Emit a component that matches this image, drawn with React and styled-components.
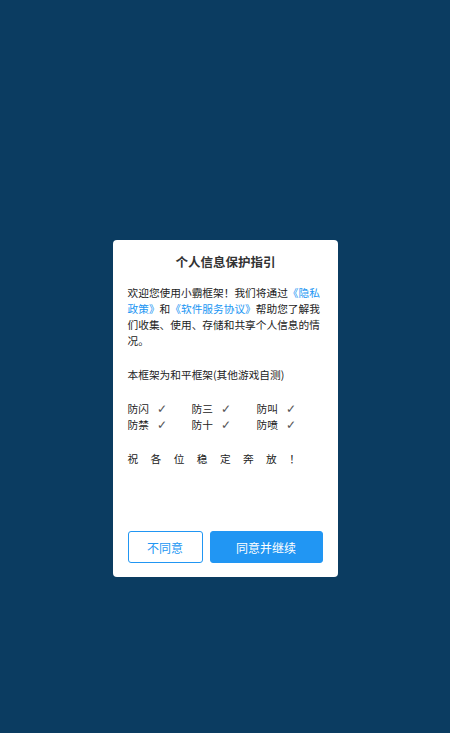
import React from 'react';
import styled, { createGlobalStyle } from 'styled-components';

const GlobalStyle = createGlobalStyle`
    html, body {
        margin: 0;
        padding: 0;
        background: #0b3c61;
    }
    body {
        font-family: "Noto Sans CJK SC", "Noto Sans", sans-serif;
    }
`;

const items = ['防闪', '防三', '防叫', '防禁', '防十', '防喷'];

const App = () => {
    return (
        <Page>
            <GlobalStyle />
            <Card>
                <Title>个人信息保护指引</Title>
                <Body>
                    <Para>
                        欢迎您使用小霸框架！我们将通过<Link>《隐私政策》</Link>和<Link>《软件服务协议》</Link>帮助您了解我们收集、使用、存储和共享个人信息的情况。
                    </Para>
                    <Para>本框架为和平框架(其他游戏自测)</Para>
                    <Grid>
                        {items.map((t) => (
                            <Item key={t}>
                                <span>{t}</span>
                                <Check>✓</Check>
                            </Item>
                        ))}
                    </Grid>
                    <Wish>
                        {'祝各位稳定奔放！'.split('').map((c, i) => (
                            <span key={i}>{c}</span>
                        ))}
                    </Wish>
                </Body>
                <Buttons>
                    <Button>不同意</Button>
                    <Button primary>同意并继续</Button>
                </Buttons>
            </Card>
        </Page>
    );
};

export default App;

const Page = styled.div`
    width: 450px;
    height: 733px;
    display: flex;
    align-items: center;
    justify-content: center;
    padding-top: 84px;
    box-sizing: border-box;
`;
const Card = styled.div`
    width: 225px;
    height: 337px;
    background: #fff;
    border-radius: 4px;
    box-sizing: border-box;
    padding: 12px 14px 14px 15px;
    display: flex;
    flex-direction: column;
    color: #222;
`;
const Title = styled.div`
    font-size: 12.5px;
    font-weight: 700;
    text-align: center;
    line-height: 20px;
    color: #333;
`;
const Body = styled.div`
    flex: 1;
    margin-top: 13px;
    font-size: 10.7px;
    line-height: 16px;
`;
const Para = styled.p`
    margin: 0 0 18px;
`;
const Link = styled.span`
    color: #2196f3;
`;
const Grid = styled.div`
    display: grid;
    grid-template-columns: 64px 65px 60px;
    margin-bottom: 18px;
`;
const Item = styled.div`
    display: flex;
    gap: 8px;
`;
const Check = styled.span`
    font-family: "DejaVu Sans", sans-serif;
    font-size: 12px;
    font-weight: 300;
    color: #555;
`;
const Wish = styled.div`
    display: flex;
    gap: 12.4px;
`;
const Buttons = styled.div`
    display: flex;
    gap: 7px;
`;
const Button = styled.button`
    height: 32px;
    width: ${(p) => (p.primary ? '113px' : '75px')};
    border-radius: 3px;
    border: 1px solid #2196f3;
    background: ${(p) => (p.primary ? '#2196f3' : '#fff')};
    color: ${(p) => (p.primary ? '#fff' : '#2196f3')};
    font-family: "Noto Sans CJK SC", sans-serif;
    font-size: 12px;
    padding: 0;
`;
